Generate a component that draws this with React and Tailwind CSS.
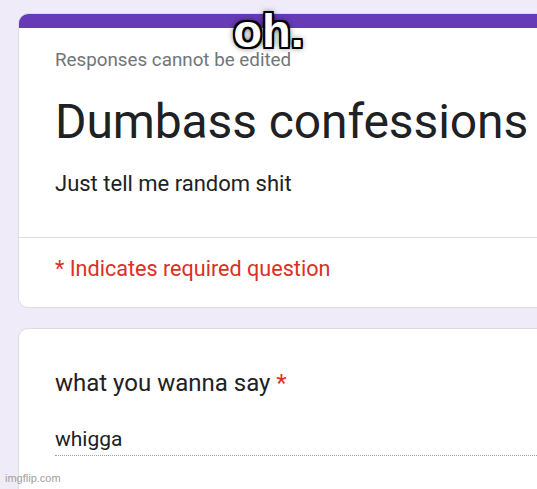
export default function App() {
  return (
    <div className="relative w-[537px] h-[489px] overflow-hidden bg-[#f0ebf8] pt-[13px] pl-[18px] font-['Roboto',sans-serif]">
      <div className="w-[640px] rounded-[10px] bg-white border border-[#dadce0] overflow-hidden">
        <div className="h-[14px] bg-[#673ab7]" />
        <div className="pl-[36px] pt-[20px] pb-[38px]">
          <div className="text-[18.8px] leading-[24px] text-[#70757a]">Responses cannot be edited</div>
          <div className="mt-[22px] text-[48px] leading-[56px] text-[#202124] tracking-[-0.1px]">Dumbass confessions</div>
          <div className="mt-[19px] text-[22px] leading-[30px] text-[#202124]">Just tell me random shit</div>
        </div>
        <div className="h-px bg-[#dadce0]" />
        <div className="pl-[36px] pt-[17px] pb-[24px]">
          <div className="text-[21.6px] leading-[28px] text-[#d93025]">* Indicates required question</div>
        </div>
      </div>
      <div className="mt-[20px] w-[640px] h-[200px] rounded-[10px] bg-white border border-[#dadce0] pl-[36px] pt-[38px]">
        <div className="text-[24px] leading-[32px] text-[#202124]">
          what you wanna say <span className="text-[#d93025]">*</span>
        </div>
        <div className="mt-[26px] pb-[2px] border-b border-dotted border-[#9aa0a6] text-[21px] leading-[28px] text-[#202124]">whigga</div>
      </div>
      <div className="absolute left-0 top-[7px] w-full text-center font-['Liberation_Sans',Arial,sans-serif] font-bold text-[47px] leading-[47px] text-white [text-shadow:2px_2px_0_#000,-2px_-2px_0_#000,2px_-2px_0_#000,-2px_2px_0_#000,0_2px_0_#000,0_-2px_0_#000,2px_0_0_#000,-2px_0_0_#000,0_0_7px_#000]">
        oh.
      </div>
      <div className="absolute left-[5px] bottom-[4px] font-['Liberation_Sans',Arial,sans-serif] text-[11px] leading-[13px] text-[#a0a0a0]">imgflip.com</div>
    </div>
  );
}
